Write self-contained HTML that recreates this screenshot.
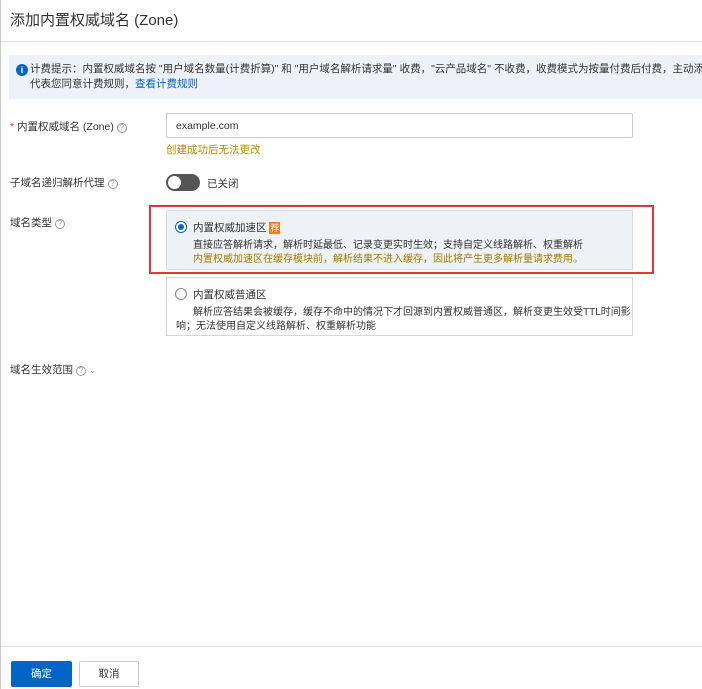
<!DOCTYPE html>
<html><head><meta charset="utf-8"><style>
*{box-sizing:border-box;margin:0;padding:0}
body{width:702px;height:689px;background:#fff;font-family:"Liberation Sans","Noto Sans CJK SC",sans-serif;font-size:12px;color:#333;position:relative;overflow:hidden;border-left:1px solid #ccc}
.a{position:absolute;white-space:nowrap}
.q{display:inline-block;width:10px;height:10px;border:1px solid #999;border-radius:50%;font-size:8px;line-height:8px;text-align:center;color:#999;vertical-align:0px;margin-left:3px}
</style></head><body>
<div class="a" style="left:9px;top:9px;font-size:15px;color:#333">添加内置权威域名 (Zone)</div>
<div class="a" style="left:0;top:41px;width:702px;height:1px;background:#e3e3e3"></div>
<div class="a" style="left:8px;top:55px;width:694px;height:44px;background:#eef2f8;overflow:hidden">
<div class="a" style="left:7px;top:9px;width:12px;height:12px;border-radius:50%;background:#0064c8;color:#fff;font-size:9px;line-height:12px;text-align:center;font-weight:bold">i</div>
<div class="a" style="left:21px;top:7px;font-size:10.5px;line-height:15px;color:#333">计费提示：内置权威域名按 "用户域名数量(计费折算)" 和 "用户域名解析请求量" 收费，"云产品域名" 不收费，收费模式为按量付费后付费，主动添加内置权威<br>代表您同意计费规则，<span style="color:#0064c8">查看计费规则</span></div>
</div>
<div class="a" style="left:9px;top:119px;font-size:10.5px"><span style="color:#d93026">*</span> 内置权威域名 (Zone)<span class="q">?</span></div>
<div class="a" style="left:165px;top:113px;width:467px;height:25px;border:1px solid #ccc;border-radius:2px;padding-left:9px;line-height:24px;font-size:10.5px">example.com</div>
<div class="a" style="left:165px;top:142px;font-size:10.5px;color:#b58a00">创建成功后无法更改</div>
<div class="a" style="left:9px;top:175px;font-size:10.5px">子域名递归解析代理<span class="q">?</span></div>
<div class="a" style="left:165px;top:174px;width:34px;height:17px;border-radius:9px;background:#555"><div style="position:absolute;left:2px;top:2px;width:13px;height:13px;border-radius:50%;background:#fff"></div></div>
<div class="a" style="left:206px;top:176px;font-size:10.5px">已关闭</div>
<div class="a" style="left:9px;top:215px;font-size:10.5px">域名类型<span class="q">?</span></div>
<div class="a" style="left:148px;top:205px;width:505px;height:69px;border:2px solid #e8323c"></div>
<div class="a" style="left:165px;top:210px;width:467px;height:60px;background:#eef1f6;border:1px solid #d6dbe3"></div>
<div class="a" style="left:174px;top:221px;width:12px;height:12px;border-radius:50%;border:1px solid #0064c8;background:#fff"><div style="position:absolute;left:2px;top:2px;width:6px;height:6px;border-radius:50%;background:#0064c8"></div></div>
<div class="a" style="left:192px;top:220px;font-size:10.5px">内置权威加速区 <span style="display:inline-block;background:#ff7a1a;color:#fff;font-size:9px;padding:0 1px;line-height:12px">荐</span></div>
<div class="a" style="left:192px;top:236px;font-size:10px">直接应答解析请求，解析时延最低、记录变更实时生效；支持自定义线路解析、权重解析</div>
<div class="a" style="left:192px;top:250px;font-size:10px;color:#a67c00">内置权威加速区在缓存模块前，解析结果不进入缓存，因此将产生更多解析量请求费用。</div>
<div class="a" style="left:165px;top:277px;width:467px;height:59px;border:1px solid #d6d6d6"></div>
<div class="a" style="left:174px;top:288px;width:12px;height:12px;border-radius:50%;border:1px solid #888"></div>
<div class="a" style="left:192px;top:287px;font-size:10.5px">内置权威普通区</div>
<div class="a" style="left:192px;top:303px;font-size:10px">解析应答结果会被缓存，缓存不命中的情况下才回源到内置权威普通区，解析变更生效受TTL时间影</div>
<div class="a" style="left:175px;top:317px;font-size:10px">响；无法使用自定义线路解析、权重解析功能</div>
<div class="a" style="left:9px;top:362px;font-size:10.5px">域名生效范围<span class="q">?</span> <span style="color:#999;font-size:9px">⌄</span></div>
<div class="a" style="left:0;top:646px;width:702px;height:1px;background:#e3e3e3"></div>
<div class="a" style="left:10px;top:661px;width:61px;height:26px;background:#0064c8;border-radius:2px;color:#fff;text-align:center;line-height:26px;font-size:10.5px">确定</div>
<div class="a" style="left:78px;top:661px;width:60px;height:26px;border:1px solid #ccc;border-radius:2px;text-align:center;line-height:24px;font-size:10.5px">取消</div>
</body></html>
